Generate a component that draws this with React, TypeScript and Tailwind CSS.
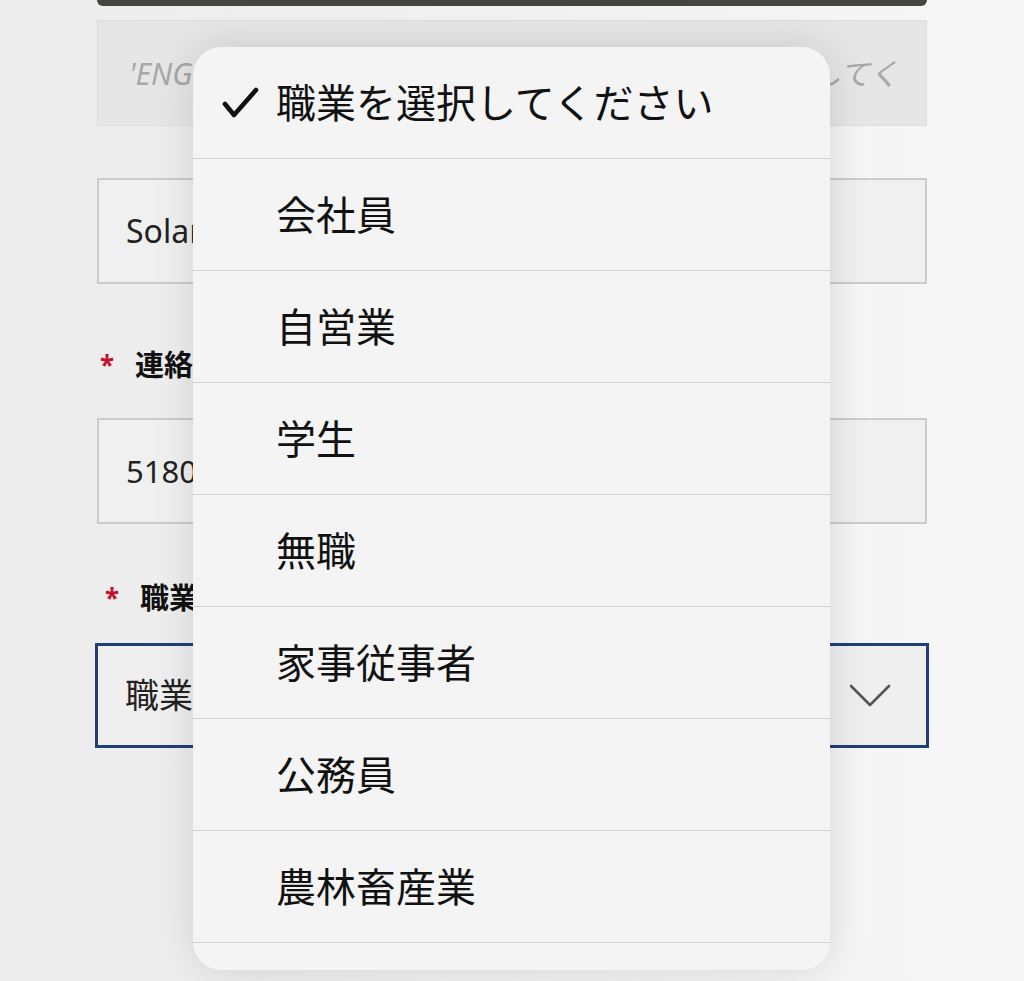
import React from 'react';

const jp = { fontFamily: '"Noto Sans", "Noto Sans CJK JP", sans-serif' };

const occupations = ['会社員', '自営業', '学生', '無職', '家事従事者', '公務員', '農林畜産業'];

function Required({ label, offset }: { label: string; offset: string }) {
  return (
    <div className={`flex items-center gap-[21px] ${offset}`}>
      <span className="text-[26px] leading-none text-[#c8102e] font-bold">*</span>
      <span className="text-[29px] leading-[40px] font-bold text-[#111]">{label}</span>
    </div>
  );
}

export default function App() {
  return (
    <main className="relative min-h-[981px] h-[981px] overflow-hidden bg-gradient-to-r from-[#ececec] to-[#f7f7f7]" style={jp}>
      <div className="mx-[97px] w-[830px]">
        <div className="h-[6px] rounded-b-[6px] bg-[#444441]" />

        <div className="mt-[14px] h-[106px] border border-[#dddddd] bg-[#e6e6e6] flex items-center pl-[31px] pr-[26px]">
          <div className="w-full overflow-hidden">
            <span className="whitespace-pre italic text-[30px] text-[#a8a8a8]">'ENGLISH NAME' 欄には 半角ローマ字で氏名を入力してください</span>
          </div>
        </div>

        <div className="mt-[52px] h-[106px] border-2 border-[#cbcbcb] bg-[#f0f0f0] flex items-center px-[27px]">
          <span className="text-[32px] text-[#222]">Solar Taro</span>
        </div>

        <div className="h-[134px] flex items-end pb-[33px]">
          <Required label="連絡先電話番号" offset="pl-[3px]" />
        </div>

        <div className="h-[106px] border-2 border-[#cbcbcb] bg-[#f0f0f0] flex items-center px-[27px]">
          <span className="text-[31px] text-[#222]">51800000000</span>
        </div>

        <div className="h-[119px] flex items-end pb-[25px]">
          <Required label="職業" offset="pl-[8px]" />
        </div>

        <div className="-mx-[2px] h-[105px] border-[3px] border-[#1f3f75] bg-[#efefef] flex items-center justify-between pl-[27px] pr-[35px]">
          <span className="text-[34px] text-[#222]">職業を選択してください</span>
          <svg width="42" height="26" viewBox="0 0 42 26" fill="none">
            <polyline points="2,3 21,22 40,3" stroke="#555" strokeWidth="2.6" strokeLinecap="round" strokeLinejoin="round" />
          </svg>
        </div>
      </div>

      {/* picker popover */}
      <div className="absolute left-[193px] top-[47px] w-[637px] h-[923px] rounded-[28px] bg-[#f4f4f4] overflow-hidden shadow-[0_0_40px_rgba(0,0,0,0.13)]">
        <div className="h-[112px] border-b border-[#d2d2d2] flex items-center pl-[28px]">
          <svg width="40" height="34" viewBox="0 0 40 34" fill="none" className="mr-[15px]">
            <polyline points="4,18 13,29 35,4" stroke="#111" strokeWidth="4.6" strokeLinecap="round" strokeLinejoin="round" />
          </svg>
          <span className="text-[40px] text-[#111]">職業を選択してください</span>
        </div>
        {occupations.map((o) => (
          <div key={o} className="h-[112px] border-b border-[#d2d2d2] flex items-center pl-[83px]">
            <span className="text-[40px] text-[#111]">{o}</span>
          </div>
        ))}
      </div>
    </main>
  );
}
